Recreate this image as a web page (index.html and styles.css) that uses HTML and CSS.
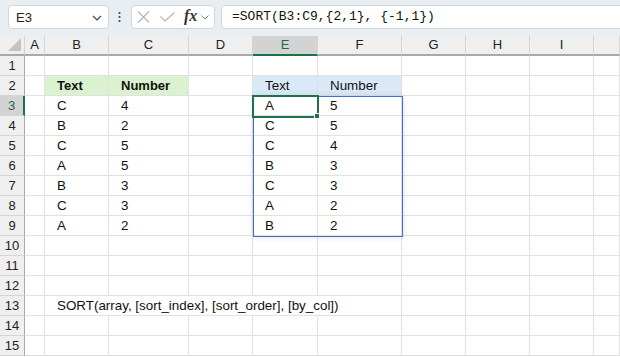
FILE: index.html
```html
<!DOCTYPE html>
<html>
<head>
<meta charset="utf-8">
<link rel="stylesheet" href="styles.css">
</head>
<body>
<div class="toolbar">
  <div class="namebox">
    <span class="nb-text">E3</span>
    <svg class="chev" width="10" height="6" viewBox="0 0 10 6"><path d="M1 1 L5 5 L9 1" fill="none" stroke="#444" stroke-width="1.2"/></svg>
  </div>
  <div class="dots">
    <svg width="3" height="12" viewBox="0 0 3 12"><circle cx="1.5" cy="2" r="1.1" fill="#444"/><circle cx="1.5" cy="6" r="1.1" fill="#444"/><circle cx="1.5" cy="10" r="1.1" fill="#444"/></svg>
  </div>
  <div class="fxbox">
    <svg class="ic-x" width="13" height="12" viewBox="0 0 13 12"><path d="M1 0.5 L12 11.5 M12 0.5 L1 11.5" stroke="#b4b4b4" stroke-width="1.1" fill="none"/></svg>
    <svg class="ic-check" width="15" height="10" viewBox="0 0 15 10"><path d="M0.5 4.5 L5 9 L14.5 0.5" stroke="#b4b4b4" stroke-width="1.1" fill="none"/></svg>
    <span class="fx">fx</span>
    <svg class="chev2" width="8" height="5" viewBox="0 0 8 5"><path d="M0.5 0.5 L4 4 L7.5 0.5" fill="none" stroke="#888" stroke-width="1"/></svg>
  </div>
  <div class="formula">=SORT(B3:C9,{2,1}, {-1,1})</div>
</div>

<div class="grid">
  <div class="ch corner"><span class="tri"></span></div>
  <div class="ch">A</div><div class="ch">B</div><div class="ch">C</div><div class="ch">D</div>
  <div class="ch ch-sel">E</div><div class="ch">F</div><div class="ch">G</div><div class="ch">H</div><div class="ch">I</div><div class="ch"></div>

  <div class="rh">1</div><div class="c"></div><div class="c"></div><div class="c"></div><div class="c"></div><div class="c"></div><div class="c"></div><div class="c"></div><div class="c"></div><div class="c"></div><div class="c"></div>

  <div class="rh">2</div><div class="c"></div><div class="c hg b">Text</div><div class="c hg b">Number</div><div class="c"></div><div class="c hb">Text</div><div class="c hb">Number</div><div class="c"></div><div class="c"></div><div class="c"></div><div class="c"></div>

  <div class="rh rh-sel">3</div><div class="c"></div><div class="c">C</div><div class="c">4</div><div class="c"></div>
  <div class="c anchor">A<div class="spill"></div><div class="sel"></div><div class="handle"></div></div>
  <div class="c">5</div><div class="c"></div><div class="c"></div><div class="c"></div><div class="c"></div>

  <div class="rh">4</div><div class="c"></div><div class="c">B</div><div class="c">2</div><div class="c"></div><div class="c">C</div><div class="c">5</div><div class="c"></div><div class="c"></div><div class="c"></div><div class="c"></div>

  <div class="rh">5</div><div class="c"></div><div class="c">C</div><div class="c">5</div><div class="c"></div><div class="c">C</div><div class="c">4</div><div class="c"></div><div class="c"></div><div class="c"></div><div class="c"></div>

  <div class="rh">6</div><div class="c"></div><div class="c">A</div><div class="c">5</div><div class="c"></div><div class="c">B</div><div class="c">3</div><div class="c"></div><div class="c"></div><div class="c"></div><div class="c"></div>

  <div class="rh">7</div><div class="c"></div><div class="c">B</div><div class="c">3</div><div class="c"></div><div class="c">C</div><div class="c">3</div><div class="c"></div><div class="c"></div><div class="c"></div><div class="c"></div>

  <div class="rh">8</div><div class="c"></div><div class="c">C</div><div class="c">3</div><div class="c"></div><div class="c">A</div><div class="c">2</div><div class="c"></div><div class="c"></div><div class="c"></div><div class="c"></div>

  <div class="rh">9</div><div class="c"></div><div class="c">A</div><div class="c">2</div><div class="c"></div><div class="c">B</div><div class="c">2</div><div class="c"></div><div class="c"></div><div class="c"></div><div class="c"></div>

  <div class="rh">10</div><div class="c"></div><div class="c"></div><div class="c"></div><div class="c"></div><div class="c"></div><div class="c"></div><div class="c"></div><div class="c"></div><div class="c"></div><div class="c"></div>

  <div class="rh">11</div><div class="c"></div><div class="c"></div><div class="c"></div><div class="c"></div><div class="c"></div><div class="c"></div><div class="c"></div><div class="c"></div><div class="c"></div><div class="c"></div>

  <div class="rh">12</div><div class="c"></div><div class="c"></div><div class="c"></div><div class="c"></div><div class="c"></div><div class="c"></div><div class="c"></div><div class="c"></div><div class="c"></div><div class="c"></div>

  <div class="rh">13</div><div class="c"></div><div class="c span5">SORT(array, [sort_index], [sort_order], [by_col])</div><div class="c"></div><div class="c"></div><div class="c"></div><div class="c"></div>

  <div class="rh">14</div><div class="c"></div><div class="c"></div><div class="c"></div><div class="c"></div><div class="c"></div><div class="c"></div><div class="c"></div><div class="c"></div><div class="c"></div><div class="c"></div>

  <div class="rh">15</div><div class="c"></div><div class="c"></div><div class="c"></div><div class="c"></div><div class="c"></div><div class="c"></div><div class="c"></div><div class="c"></div><div class="c"></div><div class="c"></div>
</div>
</body>
</html>
```

FILE: styles.css
```css
* { box-sizing: border-box; }
html, body { margin: 0; padding: 0; }
body {
  width: 620px;
  height: 357px;
  overflow: hidden;
  background: #ffffff;
  font-family: "Liberation Sans", Arial, sans-serif;
  color: #111;
}

.toolbar {
  height: 36px;
  background: #e9eef2;
  display: flex;
  align-items: flex-start;
  padding: 5px 0 0 8px;
}
.namebox {
  width: 101px;
  height: 24px;
  background: #fff;
  border: 1px solid #d3d6d9;
  border-radius: 4px;
  display: flex;
  align-items: center;
  justify-content: space-between;
  padding: 0 6px 0 7px;
  font-size: 13px;
  color: #222;
}
.nb-text { padding-top: 1px; }
.chev { margin-top: 1px; }
.dots {
  width: 22px;
  height: 24px;
  display: flex;
  align-items: center;
  justify-content: center;
  padding-right: 2px;
}
.fxbox {
  width: 84px;
  height: 24px;
  background: #fff;
  border: 1px solid #d3d6d9;
  border-radius: 4px;
  display: flex;
  align-items: center;
  padding-left: 5px;
}
.ic-x { margin-right: 10px; }
.ic-check { margin-right: 9px; }
.fx {
  font-family: "Liberation Serif", "Times New Roman", serif;
  font-style: italic;
  font-weight: bold;
  font-size: 16px;
  color: #333;
  margin-right: 4px;
  margin-top: -2px;
}
.chev2 { margin-top: 1px; }
.formula {
  flex: 1;
  margin-left: 6px;
  margin-right: -10px;
  height: 24px;
  background: #fff;
  border: 1px solid #d3d6d9;
  border-radius: 4px;
  font-family: "Liberation Mono", "Courier New", monospace;
  font-size: 13px;
  line-height: 22px;
  padding-left: 10px;
  color: #111;
}

.grid {
  display: grid;
  grid-template-columns: 25px 20px 64px 80px 64px 65px 84px 64px 64px 64px 1fr;
  grid-template-rows: 20px;
  grid-auto-rows: 20px;
}
.ch {
  background: #efefef;
  border-right: 1px solid #d5d5d5;
  border-bottom: 2px solid #a9a9a9;
  text-align: center;
  font-size: 13px;
  line-height: 18px;
  color: #222;
}
.corner { position: relative; border-right: 1px solid #d5d5d5; }
.tri {
  position: absolute;
  right: 3px;
  bottom: 3px;
  width: 0;
  height: 0;
  border-left: 13px solid transparent;
  border-bottom: 13px solid #c3c3c3;
}
.ch-sel {
  background: #d3d3d3;
  border-bottom-color: #1e7145;
  color: #1e6b3f;
}
.rh {
  background: #efefef;
  border-right: 1px solid #aaaaaa;
  border-bottom: 1px solid #d5d5d5;
  text-align: center;
  font-size: 13px;
  line-height: 20px;
  color: #222;
}
.rh-sel {
  background: #d3d3d3;
  border-right: 2px solid #1e7145;
  color: #1e6b3f;
}
.c {
  border-right: 1px solid #e1e1e1;
  border-bottom: 1px solid #e1e1e1;
  font-size: 13.4px;
  line-height: 20px;
  padding-left: 12px;
  white-space: nowrap;
  color: #111;
}
.b { font-weight: bold; font-size: 13px; }
.hg { background: #daf2d0; }
.hb { background: #dae9f8; }
.span5 { grid-column: span 5; }

.anchor { position: relative; }
.spill {
  position: absolute;
  left: 0;
  top: 0;
  width: 150px;
  height: 141px;
  border: 1px solid #3d6fd0;
  box-shadow: 0 0 6px rgba(0, 0, 0, 0.12);
  pointer-events: none;
}
.sel {
  position: absolute;
  left: -1px;
  top: -1px;
  width: 67px;
  height: 23px;
  border: 2px solid #1e7145;
}
.handle {
  position: absolute;
  left: 61px;
  top: 17px;
  width: 6px;
  height: 6px;
  background: #1e7145;
  border: 1px solid #fff;
}
```
